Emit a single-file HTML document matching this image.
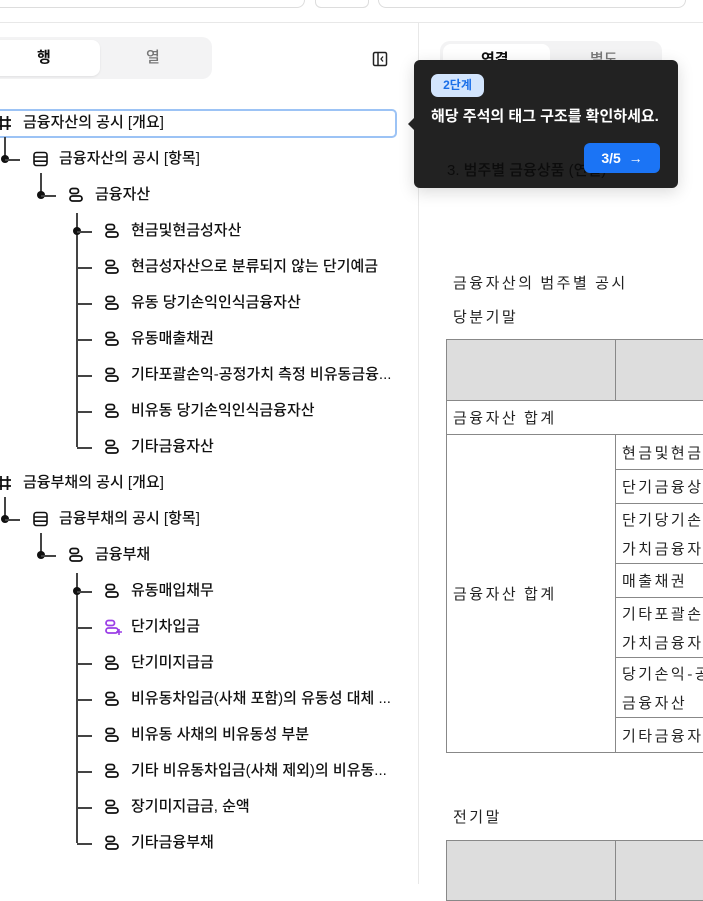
<!DOCTYPE html>
<html><head><meta charset="utf-8"><style>
*{margin:0;padding:0;box-sizing:border-box}
body{width:703px;height:884px;overflow:hidden;background:#fff;font-family:"Liberation Sans","Noto Sans CJK KR",sans-serif;color:#111;position:relative}
.a{position:absolute}
.t{position:absolute;font-size:15px;font-weight:500;white-space:nowrap;line-height:20px;transform:translateY(-10px)}
.hl{position:absolute;height:1.5px;background:#444}
.vl{position:absolute;width:1.5px;background:#444}
.dot{position:absolute;width:8px;height:8px;border-radius:50%;background:#111;transform:translate(-4px,-4px)}
.ic{position:absolute;transform:translateY(-8px)}
.k{font-family:"Noto Sans CJK KR",sans-serif;letter-spacing:2.5px;font-size:15px;font-weight:400;color:#222}
td{border:1px solid #888;font-size:15px;letter-spacing:2.5px;padding:0 6px;color:#222;font-family:"Noto Sans CJK KR",sans-serif}
</style></head><body>
<div class="a" style="left:-20px;top:-12px;width:325px;height:20px;border:1px solid #ddd;border-radius:8px"></div>
<div class="a" style="left:315px;top:-12px;width:54px;height:20px;border:1px solid #ddd;border-radius:6px"></div>
<div class="a" style="left:378px;top:-12px;width:308px;height:20px;border:1px solid #ddd;border-radius:8px"></div>
<div class="a" style="left:0;top:22px;width:703px;height:1px;background:#e8e8e8"></div>
<div class="a" style="left:418px;top:23px;width:1px;height:861px;background:#e8e8e8"></div>
<div class="a" style="left:-10px;top:37px;width:222px;height:42px;background:#f3f3f4;border-radius:10px"></div>
<div class="a" style="left:-10px;top:40px;width:110px;height:36px;background:#fff;border-radius:8px;box-shadow:0 1px 2px rgba(0,0,0,.08)"></div>
<div class="t" style="left:37px;top:58px;font-weight:bold">행</div>
<div class="t" style="left:146px;top:58px;color:#777">열</div>
<svg class="a" style="left:372px;top:51px" width="16" height="16" viewBox="0 0 16 16"><rect x="1.5" y="1.5" width="13" height="13" rx="1.5" fill="none" stroke="#222" stroke-width="1.5"/><line x1="6" y1="2" x2="6" y2="14" stroke="#222" stroke-width="1.5"/><path d="M11 5.5 L9 8 L11 10.5" fill="none" stroke="#222" stroke-width="1.3"/></svg>
<div class="a" style="left:-10px;top:109px;width:407px;height:29px;border:2px solid #9cc3f5;border-radius:5px"></div>
<div id="tree"></div>
<div class="a" style="left:440px;top:41px;width:222px;height:36px;background:#f3f3f4;border-radius:10px"></div>
<div class="a" style="left:443px;top:44px;width:107px;height:30px;background:#fff;border-radius:8px"></div>
<div class="t" style="left:481px;top:60px;font-weight:bold">연결</div>
<div class="t" style="left:590px;top:60px;color:#777">별도</div>
<div class="a" style="left:414px;top:60px;width:264px;height:128px;background:#222;border-radius:6px;box-shadow:0 4px 16px rgba(0,0,0,.15)"></div>
<div class="a" style="left:408px;top:118px;width:0;height:0;border-top:6px solid transparent;border-bottom:6px solid transparent;border-right:6px solid #222"></div>
<div class="t" style="left:447px;top:171px;font-weight:500;color:#0c0c0c;font-size:15px">3. 범주별 금융상품 (연결)</div>
<div class="a" style="left:431px;top:74px;width:53px;height:23px;background:#d3e5fd;border-radius:7px;color:#1a6fe8;font-size:12px;font-weight:bold;text-align:center;line-height:23px">2단계</div>
<div class="t" style="left:431px;top:117px;color:#fff;font-weight:bold;font-size:15px">해당 주석의 태그 구조를 확인하세요.</div>
<div class="a" style="left:584px;top:143px;width:76px;height:30px;background:#1b74f5;border-radius:6px;color:#fff;font-weight:bold;font-size:14px;text-align:center;line-height:30px">3/5 &nbsp;→</div>
<div class="t k" style="left:453px;top:283px">금융자산의 범주별 공시</div>
<div class="t k" style="left:453px;top:317px">당분기말</div>
<table class="a" style="left:446px;top:339px;border-collapse:collapse;width:300px">
<tr style="height:61px"><td style="background:#ddd;width:169px"></td><td style="background:#ddd"></td></tr>
<tr style="height:34px"><td colspan="2">금융자산 합계</td></tr>
<tr style="height:35px"><td rowspan="7">금융자산 합계</td><td>현금및현금</td></tr>
<tr style="height:34px"><td>단기금융상</td></tr>
<tr style="height:60px"><td style="line-height:29px">단기당기손<br>가치금융자</td></tr>
<tr style="height:34px"><td>매출채권</td></tr>
<tr style="height:60px"><td style="line-height:29px">기타포괄손<br>가치금융자</td></tr>
<tr style="height:60px"><td style="line-height:29px">당기손익-공<br>금융자산</td></tr>
<tr style="height:35px"><td>기타금융자</td></tr>
</table>
<div class="t k" style="left:453px;top:817px">전기말</div>
<table class="a" style="left:446px;top:840px;border-collapse:collapse;width:300px"><tr style="height:60px"><td style="background:#ddd;width:169px"></td><td style="background:#ddd"></td></tr></table>
<script>
var T=document.getElementById('tree'),h='';
function hashI(y){return '<svg class="ic" style="left:-3px;top:'+y+'px" width="15" height="16" viewBox="0 0 15 16"><path d="M4 1V15M10.5 1V15M0 5H14M0 11H14" stroke="#111" stroke-width="1.8"/></svg>';}
function listI(x,y){return '<svg class="ic" style="left:'+x+'px;top:'+y+'px" width="15" height="16" viewBox="0 0 15 16"><rect x="1" y="1.5" width="13" height="13" rx="2.5" fill="none" stroke="#111" stroke-width="1.6"/><path d="M1 6H14M1 10.2H14" stroke="#111" stroke-width="1.6"/></svg>';}
function tagI(x,y,c,p){return '<svg class="ic" style="left:'+x+'px;top:'+y+'px" width="17" height="16" viewBox="0 0 17 16"><rect x="1" y="1.5" width="8.5" height="5" rx="2.5" fill="none" stroke="'+c+'" stroke-width="1.8"/><rect x="1" y="9" width="12" height="5" rx="2.5" fill="none" stroke="'+c+'" stroke-width="1.8"/>'+(p?'<path d="M14 10V16M11 13H17" stroke="'+c+'" stroke-width="1.6"/>':'')+'</svg>';}
function txt(x,y,s){return '<div class="t" style="left:'+x+'px;top:'+y+'px">'+s+'</div>';}
function grp(y0,a,b,c,items){
h+=hashI(y0)+txt(23,y0,a);
var y1=y0+36,y2=y0+72;
h+='<div class="vl" style="left:4px;top:'+(y0+14)+'px;height:'+(y1-y0-14)+'px"></div><div class="dot" style="left:5px;top:'+y1+'px"></div><div class="hl" style="left:5px;top:'+y1+'px;width:15px"></div>'+listI(33,y1)+txt(59,y1,b);
h+='<div class="vl" style="left:40px;top:'+(y1+14)+'px;height:'+(y2-y1-14)+'px"></div><div class="dot" style="left:41px;top:'+y2+'px"></div><div class="hl" style="left:41px;top:'+y2+'px;width:15px"></div>'+tagI(69,y2,'#111')+txt(95,y2,c);
var y3=y2+36,yl=y3+36*(items.length-1);
h+='<div class="vl" style="left:76px;top:'+(y2+18)+'px;height:'+(yl-y2-18)+'px"></div><div class="dot" style="left:77px;top:'+y3+'px"></div>';
items.forEach(function(s,i){var y=y3+36*i;var p=s[0]=='*';if(p)s=s.slice(1);h+='<div class="hl" style="left:77px;top:'+y+'px;width:15px"></div>'+tagI(105,y,p?'#9b3ee6':'#111',p)+txt(131,y,s);});
}
grp(123,'금융자산의 공시 [개요]','금융자산의 공시 [항목]','금융자산',['현금및현금성자산','현금성자산으로 분류되지 않는 단기예금','유동 당기손익인식금융자산','유동매출채권','기타포괄손익-공정가치 측정 비유동금융...','비유동 당기손익인식금융자산','기타금융자산']);
grp(483,'금융부채의 공시 [개요]','금융부채의 공시 [항목]','금융부채',['유동매입채무','*단기차입금','단기미지급금','비유동차입금(사채 포함)의 유동성 대체 ...','비유동 사채의 비유동성 부분','기타 비유동차입금(사채 제외)의 비유동...','장기미지급금, 순액','기타금융부채']);
T.innerHTML=h;
</script>
</body></html>
